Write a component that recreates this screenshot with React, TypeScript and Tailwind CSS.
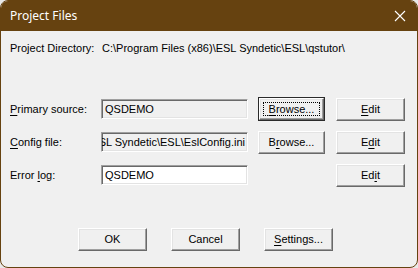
import React from "react";

const U = ({ children }: { children: React.ReactNode }) => (
  <span className="underline decoration-1 underline-offset-[2px]">{children}</span>
);

interface BtnProps {
  children: React.ReactNode;
  focused?: boolean;
  className?: string;
}

const Btn = ({ children, focused, className }: BtnProps) => (
  <div className={`${focused ? "border border-[#2a2a2a]" : ""} h-[23px] bg-[#f0f0f0] ${className ?? ""}`}>
    <div className="relative h-full w-full border border-t-white border-l-white border-r-[#696969] border-b-[#696969] shadow-[inset_-1px_-1px_0_#a0a0a0,inset_1px_1px_0_#e3e3e3] flex items-center justify-center">
      {focused && <div className="absolute inset-[3px] border border-dotted border-black" />}
      <span className="leading-[13px]">{children}</span>
    </div>
  </div>
);

interface FieldProps {
  children: React.ReactNode;
  white?: boolean;
  right?: boolean;
}

const Field = ({ children, white, right }: FieldProps) => (
  <div
    className={`w-[147px] h-[20px] border border-t-[#a0a0a0] border-l-[#a0a0a0] border-r-white border-b-white shadow-[inset_1px_1px_0_#696969,inset_-1px_-1px_0_#e3e3e3] ${white ? "bg-white" : "bg-[#f0f0f0]"} flex items-center overflow-hidden whitespace-nowrap ${right ? "justify-end pr-[2px]" : "pl-[3px]"}`}
  >
    <span className="leading-[13px]">{children}</span>
  </div>
);

const App = () => {
  return (
    <div className="w-[418px] h-[268px] bg-[#e9e9e9]">
      <div className="w-[418px] h-[268px] rounded-[8px] border border-[#664210] bg-[#f0f0f0] overflow-hidden flex flex-col font-['Liberation_Sans',Arial,sans-serif] text-[11px] text-black">
        {/* title bar */}
        <div className="h-[30px] shrink-0 bg-[#664210] flex items-center justify-between pl-[9px] pr-[10px]">
          <span className="font-['Noto_Sans',sans-serif] text-[12px] text-white leading-none">Project Files</span>
          <svg width="12" height="12" viewBox="0 0 12 12" className="mr-[1px]">
            <path d="M1 1L11 11M11 1L1 11" stroke="white" strokeWidth="1.1" />
          </svg>
        </div>

        <div className="flex flex-col pl-[9px]">
          <div className="mt-[11px] flex leading-[13px]">
            <span className="w-[92px]">Project Directory:</span>
            <span>C:\Program Files (x86)\ESL Syndetic\ESL\qstutor\</span>
          </div>

          <div className="mt-[42px] flex flex-col gap-[9px]">
            <div className="h-[24px] flex items-center">
              <span className="w-[91px]"><U>P</U>rimary source:</span>
              <Field>QSDEMO</Field>
              <Btn focused className="ml-[10px] w-[67px] h-[24px]">
                <U>B</U>rowse...
              </Btn>
              <Btn className="ml-[11px] w-[69px]">
                <U>E</U>dit
              </Btn>
            </div>
            <div className="h-[24px] flex items-center">
              <span className="w-[91px]"><U>C</U>onfig file:</span>
              <Field right>C:\Program Files (x86)\ESL Syndetic\ESL\EslConfig.ini</Field>
              <Btn className="ml-[10px] w-[67px]">
                B<U>r</U>owse...
              </Btn>
              <Btn className="ml-[11px] w-[69px]">
                E<U>d</U>it
              </Btn>
            </div>
            <div className="h-[24px] flex items-center">
              <span className="w-[91px]">Error <U>l</U>og:</span>
              <Field white>QSDEMO</Field>
              <div className="ml-[10px] w-[67px]" />
              <Btn className="ml-[11px] w-[69px]">
                Ed<U>i</U>t
              </Btn>
            </div>
          </div>

          <div className="mt-[41px] flex gap-[24px] pl-[68px]">
            <Btn className="w-[69px]">OK</Btn>
            <Btn className="w-[69px]">Cancel</Btn>
            <Btn className="w-[69px]">
              <U>S</U>ettings...
            </Btn>
          </div>
        </div>
      </div>
    </div>
  );
};

export default App;
